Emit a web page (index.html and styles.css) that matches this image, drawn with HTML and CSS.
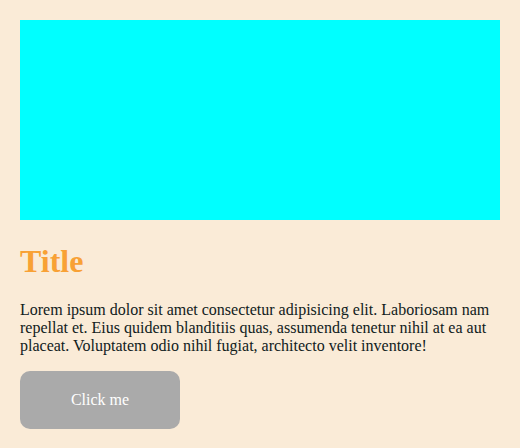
FILE: index.html
```html
<!DOCTYPE html>
<html>
<head>
<meta charset="utf-8">
<link rel="stylesheet" href="styles.css">
</head>
<body>
<div class="card">
  <div class="media"></div>
  <h1 class="title">Title</h1>
  <p class="text">Lorem ipsum dolor sit amet consectetur adipisicing elit. Laboriosam nam repellat et. Eius quidem blanditiis quas, assumenda tenetur nihil at ea aut placeat. Voluptatem odio nihil fugiat, architecto velit inventore!</p>
  <button class="btn">Click me</button>
</div>
</body>
</html>
```
FILE: styles.css
```css
html, body {
  margin: 0;
  background: #faebd7;
}
body {
  font-family: "Liberation Serif", "Times New Roman", serif;
  font-size: 16px;
  color: #102020;
}
.card {
  padding: 20px;
}
.media {
  height: 200px;
  background: #00ffff;
}
.title {
  font-size: 32px;
  font-weight: bold;
  color: #f8a135;
  margin: 23px 0 21px;
}
.text {
  margin: 16px 0;
  line-height: 18px;
}
.btn {
  display: block;
  width: 160px;
  height: 58px;
  border: none;
  border-radius: 10px;
  background: #aaaaaa;
  color: #ffffff;
  font-family: "Liberation Serif", "Times New Roman", serif;
  font-size: 16px;
  padding: 0;
}
```
